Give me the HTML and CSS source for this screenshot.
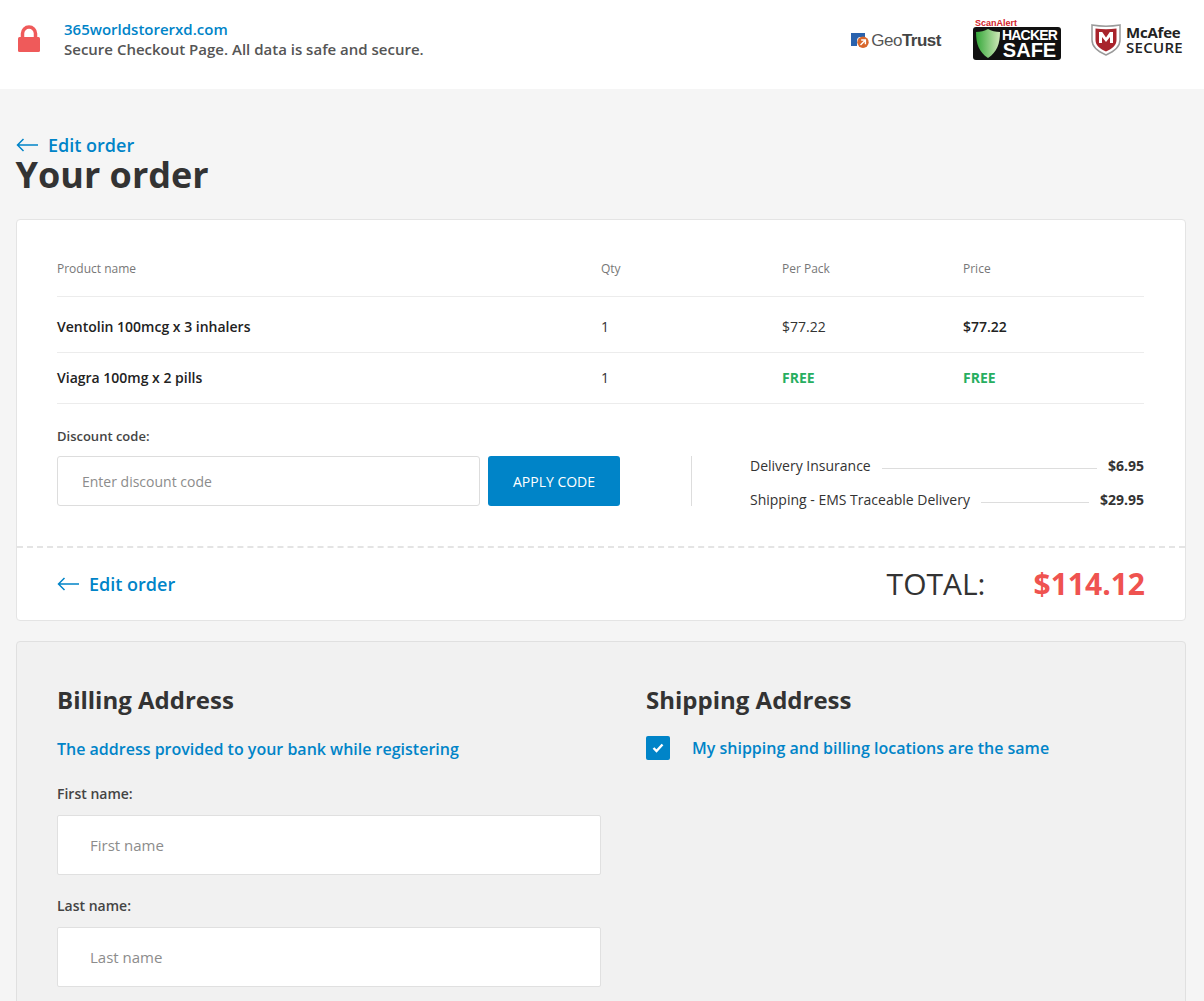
FILE: index.html
```html
<!DOCTYPE html>
<html lang="en">
<head>
    <meta charset="UTF-8">
    <meta name="viewport" content="width=device-width, initial-scale=1.0">
    <title>Secure Checkout</title>
    <link rel="stylesheet" href="styles.css">
</head>
<body>
    <header class="top-bar">
        <svg class="lock-icon" width="22" height="27" viewBox="0 0 22 27">
            <path d="M4.500 14V8.500a6.500 6.500 0 0 1 13 0V14" fill="none" stroke="#ef5a5a" stroke-width="3.500"/>
            <rect x="0" y="12" width="22" height="15" rx="1.500" fill="#ef5a5a"/>
        </svg>
        <div class="site-info">
            <a class="site-name" href="#">365worldstorerxd.com</a>
            <p class="site-note">Secure Checkout Page. All data is safe and secure.</p>
        </div>
        <div class="badges">
            <div class="badge-geotrust">
                <svg width="18" height="15" viewBox="0 0 18 15">
                    <path d="M0 0h14v4H9.500A3.500 3.500 0 0 0 6 7.500V13H0z" fill="#2a62ad"/>
                    <circle cx="12" cy="9.300" r="5.700" fill="#d9672b"/>
                    <path d="M9.500 12l4.500-4.500M10.200 7h4.200v4.200" fill="none" stroke="#fff" stroke-width="1.400"/>
                </svg>
                <span class="geo-text">Geo<b>Trust</b></span>
            </div>
            <div class="badge-hacker">
                <span class="scan-text">Scan<b>Alert</b></span>
                <div class="hacker-box">
                    <svg width="24" height="29" viewBox="0 0 24 29">
                        <defs>
                            <linearGradient id="shield-fill" x1="0" x2="1" y1="0" y2="0">
                                <stop offset="0" stop-color="#35a83a"/>
                                <stop offset="1" stop-color="#cfe8b8"/>
                            </linearGradient>
                        </defs>
                        <path d="M12 0c3 2 8 3 12 3 0 12-3 20-12 26C3 23 0 15 0 3c4 0 9-1 12-3z" fill="url(#shield-fill)"/>
                    </svg>
                    <div class="hacker-words">
                        <span class="hacker-line">HACKER</span>
                        <span class="safe-line">SAFE</span>
                    </div>
                </div>
            </div>
            <div class="badge-mcafee">
                <svg width="30" height="33" viewBox="0 0 30 33">
                    <path d="M1 2c9 1.500 19 1.500 28 0v15c0 8-7 12-14 15C8 29 1 25 1 17z" fill="#fff" stroke="#9a9a9a" stroke-width="1.500"/>
                    <path d="M4.500 5.500c7 1 14 1 21 0V17c0 6-5 9-10.500 11.500C9.500 26 4.500 23 4.500 17z" fill="#a8242c"/>
                    <path d="M8 20V9h3.200l3.800 5.500L18.800 9H22v11h-3v-6l-4 5-4-5v6z" fill="#fff"/>
                </svg>
                <div class="mcafee-words">
                    <span class="mcafee-line">McAfee</span>
                    <span class="secure-line">SECURE</span>
                </div>
            </div>
        </div>
    </header>

    <main class="page">
        <a class="edit-link edit-top" href="#">
            <svg class="arrow" width="22" height="14" viewBox="0 0 22 14">
                <path d="M22 7H1.500M7.500 1L1.500 7l6 6" fill="none" stroke="#0084c8" stroke-width="1.500"/>
            </svg>
            Edit order
        </a>
        <h1 class="page-title">Your order</h1>

        <section class="card order-card">
            <div class="order-body">
                <div class="order-row order-head">
                    <span>Product name</span>
                    <span>Qty</span>
                    <span>Per Pack</span>
                    <span>Price</span>
                </div>
                <div class="order-row order-item">
                    <span class="item-name">Ventolin 100mcg x 3 inhalers</span>
                    <span>1</span>
                    <span>$77.22</span>
                    <span class="item-price">$77.22</span>
                </div>
                <div class="order-row order-item">
                    <span class="item-name">Viagra 100mg x 2 pills</span>
                    <span>1</span>
                    <span class="free">FREE</span>
                    <span class="free">FREE</span>
                </div>

                <div class="order-extras">
                    <div class="discount">
                        <label class="field-label discount-label" for="discount">Discount code:</label>
                        <div class="discount-row">
                            <input class="discount-input" id="discount" type="text" placeholder="Enter discount code">
                            <button class="apply-button">APPLY CODE</button>
                        </div>
                    </div>
                    <div class="fees">
                        <div class="fee">
                            <span>Delivery Insurance</span>
                            <span class="fee-line"></span>
                            <b>$6.95</b>
                        </div>
                        <div class="fee">
                            <span>Shipping - EMS Traceable Delivery</span>
                            <span class="fee-line"></span>
                            <b>$29.95</b>
                        </div>
                    </div>
                </div>
            </div>

            <div class="order-foot">
                <a class="edit-link" href="#">
                    <svg class="arrow" width="22" height="14" viewBox="0 0 22 14">
                        <path d="M22 7H1.500M7.500 1L1.500 7l6 6" fill="none" stroke="#0084c8" stroke-width="1.500"/>
                    </svg>
                    Edit order
                </a>
                <div class="total">
                    <span class="total-label">TOTAL:</span>
                    <span class="total-value">$114.12</span>
                </div>
            </div>
        </section>

        <section class="card address-card">
            <div class="address-col billing">
                <h2 class="address-title">Billing Address</h2>
                <p class="address-note">The address provided to your bank while registering</p>
                <label class="field-label" for="first-name">First name:</label>
                <input class="text-input" id="first-name" type="text" placeholder="First name">
                <label class="field-label" for="last-name">Last name:</label>
                <input class="text-input" id="last-name" type="text" placeholder="Last name">
            </div>
            <div class="address-col shipping">
                <h2 class="address-title">Shipping Address</h2>
                <div class="same-address">
                    <span class="check-box">
                        <svg width="12" height="10" viewBox="0 0 12 10">
                            <path d="M1.500 5l3 3 6-6.500" fill="none" stroke="#fff" stroke-width="2.400"/>
                        </svg>
                    </span>
                    <span class="same-text">My shipping and billing locations are the same</span>
                </div>
            </div>
        </section>
    </main>
</body>
</html>
```

FILE: styles.css
```css
* {
    box-sizing: border-box;
    margin: 0;
    padding: 0;
    font-family: "Open Sans", sans-serif;
}

html,
body {
    height: 100vh;
    overflow: hidden;
}

body {
    background-color: #f5f5f5;
    color: #333;
    font-size: 14px;
}

a {
    text-decoration: none;
}

/* top bar */
.top-bar {
    display: flex;
    align-items: center;
    height: 89px;
    padding: 0 21px 0 18px;
    background-color: white;
}

.lock-icon {
    flex-shrink: 0;
    margin-bottom: 12px;
}

.site-info {
    margin-left: 24px;
    margin-bottom: 11px;
}

.site-name {
    display: block;
    font-size: 15px;
    line-height: 20px;
    font-weight: 600;
    color: #0084c8;
}

.site-note {
    font-size: 15px;
    line-height: 20px;
    font-weight: 600;
    color: #555;
}

.badges {
    display: flex;
    align-items: center;
    margin-left: auto;
    margin-bottom: 10px;
}

.badge-geotrust {
    display: flex;
    align-items: center;
    gap: 2px;
    margin-top: 2px;
}

.geo-text {
    font-family: "Liberation Sans", sans-serif;
    font-size: 17px;
    letter-spacing: -0.5px;
    color: #555;
}

.geo-text b {
    font-family: "Liberation Sans", sans-serif;
    color: #444;
}

.badge-hacker {
    display: flex;
    flex-direction: column;
    width: 88px;
    margin-left: 32px;
}

.scan-text {
    font-family: "Liberation Sans", sans-serif;
    font-size: 9px;
    line-height: 8px;
    font-weight: 700;
    color: #d2232a;
    margin-left: 2px;
}

.scan-text b {
    font-family: "Liberation Sans", sans-serif;
}

.hacker-box {
    display: flex;
    align-items: center;
    gap: 2px;
    height: 33px;
    padding: 0 3px;
    background-color: #111;
    border-radius: 3px;
}

.hacker-words {
    display: flex;
    flex-direction: column;
    align-items: center;
    color: white;
}

.hacker-line {
    font-family: "Liberation Sans", sans-serif;
    font-size: 14px;
    line-height: 14px;
    font-weight: 700;
    letter-spacing: -0.8px;
}

.safe-line {
    font-family: "Liberation Sans", sans-serif;
    font-size: 20px;
    line-height: 17px;
    font-weight: 700;
}

.badge-mcafee {
    display: flex;
    align-items: center;
    gap: 5px;
    margin-left: 30px;
}

.mcafee-words {
    display: flex;
    flex-direction: column;
}

.mcafee-line,
.secure-line {
    font-size: 15px;
    line-height: 15px;
    font-weight: 700;
    letter-spacing: -0.2px;
    color: #222;
}

.secure-line {
    font-weight: 600;
    letter-spacing: 0.3px;
}

/* page */
.page {
    padding: 0 18px 0 16px;
}

.edit-link {
    display: inline-flex;
    align-items: center;
    gap: 10px;
    font-size: 18px;
    font-weight: 600;
    line-height: 24px;
    color: #0084c8;
}

.edit-top {
    display: flex;
    margin-top: 44px;
}

.page-title {
    font-size: 36px;
    line-height: 36px;
    font-weight: 700;
    color: #333;
    margin-left: -0.5px;
    margin-bottom: 26px;
}

.card {
    border: 1px solid #e4e4e4;
    border-radius: 4px;
}

.order-card {
    background-color: white;
}

.order-body {
    padding: 32px 41px 40px 40px;
}

.order-row {
    display: grid;
    grid-template-columns: 544px 181px 181px 1fr;
    align-items: center;
    border-bottom: 1px solid #ececec;
}

.order-head {
    height: 45px;
    padding-bottom: 12px;
    font-size: 12px;
    color: #777;
}

.order-item {
    height: 51px;
    padding-bottom: 1px;
    font-size: 14px;
    color: #333;
}

.order-head + .order-item {
    height: 56px;
    padding-top: 4px;
    padding-bottom: 0;
}

.item-name,
.item-price {
    font-weight: 600;
    color: #222;
}

.free {
    font-weight: 700;
    color: #27ae60;
}

.order-extras {
    display: flex;
    margin-top: 22px;
}

.field-label {
    display: block;
    font-size: 14px;
    line-height: 20px;
    font-weight: 600;
    color: #444;
}

.discount-label {
    font-size: 13px;
    margin-bottom: 10px;
}

.discount-row {
    display: flex;
    gap: 8px;
}

.discount-input {
    width: 423px;
    height: 50px;
    padding: 0 24px;
    background-color: white;
    border: 1px solid #ddd;
    border-radius: 3px;
    font-size: 14px;
}

.discount-input::placeholder,
.text-input::placeholder {
    color: #8c8c8c;
    opacity: 1;
}

.apply-button {
    width: 132px;
    height: 50px;
    background-color: #0084c8;
    border: none;
    border-radius: 3px;
    font-size: 14px;
    color: white;
}

.fees {
    flex: 1;
    display: flex;
    flex-direction: column;
    gap: 18px;
    height: 50px;
    margin-top: 30px;
    margin-left: 71px;
    padding-top: 2px;
    padding-left: 58px;
    border-left: 1px solid #ddd;
    font-size: 14px;
}

.fee {
    display: flex;
    align-items: center;
    gap: 11px;
    line-height: 16px;
    color: #333;
}

.fee b {
    font-weight: 700;
    color: #333;
}

.fee-line {
    flex: 1;
    height: 1px;
    margin-top: 5px;
    background-color: #ddd;
}

.order-foot {
    display: flex;
    align-items: center;
    justify-content: space-between;
    height: 74px;
    padding: 0 40px 1px;
    border-top: 2px dashed #e4e4e4;
}

.total {
    display: flex;
    align-items: center;
    gap: 48px;
}

.total-label {
    font-size: 30px;
    font-weight: 400;
    color: #333;
}

.total-value {
    font-size: 30px;
    font-weight: 700;
    color: #ef5350;
}

.address-card {
    display: flex;
    height: 500px;
    margin-top: 20px;
    padding: 40px;
    background-color: #f1f1f1;
    border-color: #e0e0e0;
}

.billing {
    width: 544px;
}

.shipping {
    margin-left: 45px;
}

.address-title {
    font-size: 24px;
    line-height: 36px;
    font-weight: 700;
    color: #333;
}

.address-note {
    margin-top: 20px;
    font-size: 16px;
    line-height: 22px;
    font-weight: 600;
    color: #0084c8;
}

.billing .field-label {
    margin-top: 21px;
}

.billing .address-note + .field-label {
    margin-top: 24px;
}

.text-input {
    display: block;
    width: 100%;
    height: 60px;
    margin-top: 11px;
    padding: 0 32px;
    background-color: white;
    border: 1px solid #e0e0e0;
    border-radius: 2px;
    font-size: 15px;
}

.same-address {
    display: flex;
    align-items: center;
    gap: 22px;
    margin-top: 18px;
}

.check-box {
    display: flex;
    align-items: center;
    justify-content: center;
    width: 24px;
    height: 24px;
    background-color: #0084c8;
    border-radius: 2px;
}

.same-text {
    font-size: 16px;
    font-weight: 600;
    color: #0084c8;
}
```
